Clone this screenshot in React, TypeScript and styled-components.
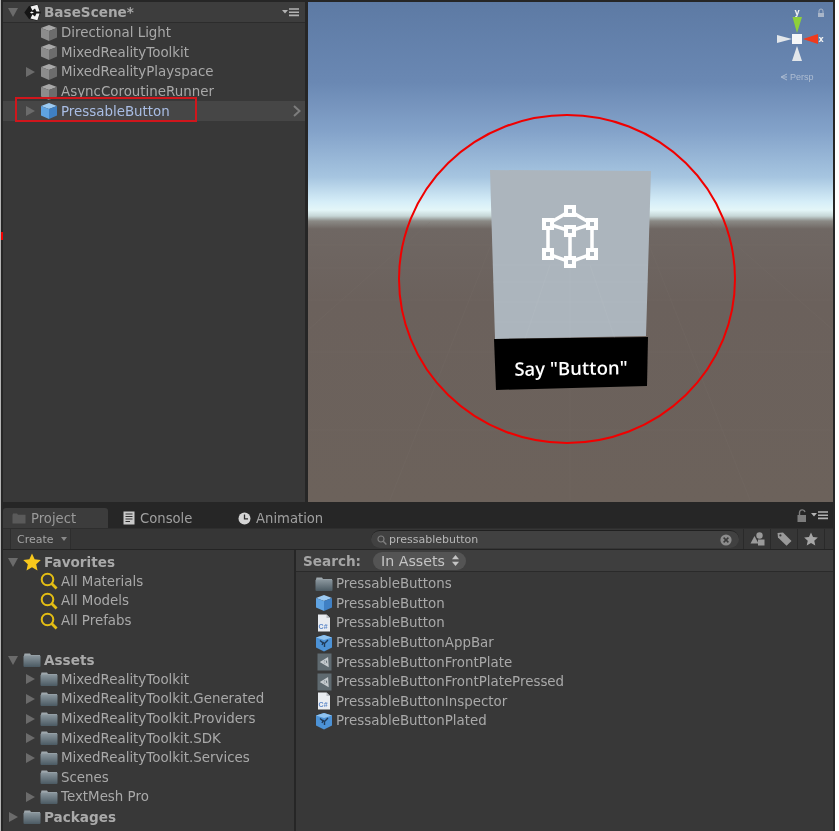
import React from "react"
import styled, { createGlobalStyle } from "styled-components"

const GlobalStyle = createGlobalStyle`
    html, body {
        margin: 0;
        padding: 0;
        background: #ffffff;
    }
    #root {
        width: 839px;
        height: 831px;
    }
`

const Window = styled.div`
    position: relative;
    box-sizing: border-box;
    width: 835px;
    height: 831px;
    padding: 2px 2px 0 2px;
    display: flex;
    flex-direction: column;
    background: #262626;
    border-left: 1px solid #b5b5b5;
    font-family: "DejaVu Sans", sans-serif;
    font-size: 13.4px;
    color: #a9a9a9;
    overflow: hidden;
    filter: blur(0.3px);
`

const EdgeMark = styled.div`
    position: absolute;
    left: 0;
    top: 232px;
    width: 2px;
    height: 8px;
    background: #f00000;
`

const TopArea = styled.div`
    display: flex;
    height: 500px;
    gap: 3px;
`

const HierarchyPanel = styled.section`
    width: 302px;
    background: #383838;
    display: flex;
    flex-direction: column;
`

const PanelHeader = styled.div`
    box-sizing: border-box;
    height: 21px;
    display: flex;
    align-items: center;
    justify-content: space-between;
    padding: 0 6px 0 5px;
    background: #3d3d3d;
    border-bottom: 1px solid #2c2c2c;
`

const HeaderLeft = styled.div`
    display: flex;
    align-items: center;
`

const Row = styled.div<{ $depth?: number; $selected?: boolean }>`
    position: relative;
    box-sizing: border-box;
    height: 19.6px;
    display: flex;
    align-items: center;
    padding-left: ${({ $depth = 0 }) => 5 + $depth * 17}px;
    background: ${({ $selected }) => ($selected ? "#464646" : "transparent")};
    color: ${({ $selected }) => ($selected ? "#a9bde4" : "inherit")};
    white-space: nowrap;
`

const ArrowSlot = styled.span`
    width: 15px;
    height: 12px;
    flex: none;
    display: flex;
    align-items: center;
`

const IconSlot = styled.span`
    width: 18px;
    height: 18px;
    flex: none;
    margin-right: 3px;
    display: flex;
    align-items: center;
    justify-content: center;
`

const Label = styled.span<{ $bold?: boolean }>`
    font-weight: ${({ $bold }) => ($bold ? 700 : 400)};
    font-size: ${({ $bold }) => ($bold ? "13.6px" : "inherit")};
`

const SelectionBox = styled.div`
    position: absolute;
    left: 12px;
    top: -4px;
    width: 182px;
    height: 25px;
    border: 2px solid #d0161c;
    box-sizing: border-box;
`

const RowChevron = styled.svg`
    position: absolute;
    right: 4px;
    top: 4px;
`

const ScenePanel = styled.section`
    position: relative;
    flex: 1;
    background: linear-gradient(
        180deg,
        #5d7aa4 0,
        #6a88b3 80px,
        #84a3ca 130px,
        #a6c5e0 175px,
        #d6eef8 200px,
        #e4f6f8 208px,
        #c6d6d6 214px,
        #8b8a86 219px,
        #6f6763 227px,
        #6b615c 300px,
        #6c625b 500px
    );
`

const SceneDrawing = styled.svg`
    position: absolute;
    left: 0;
    top: 0;
    width: 100%;
    height: 100%;
`

const BottomArea = styled.div`
    flex: 1;
    display: flex;
    flex-direction: column;
    min-height: 0;
`

const TabBar = styled.div`
    height: 26px;
    box-sizing: border-box;
    padding-top: 6px;
    display: flex;
    align-items: stretch;
    position: relative;
`

const Tab = styled.div<{ $active?: boolean; $width: number }>`
    box-sizing: border-box;
    width: ${({ $width }) => $width}px;
    display: flex;
    align-items: center;
    gap: 5px;
    padding-left: ${({ $active }) => ($active ? 9 : 15)}px;
    font-size: 13.2px;
    color: ${({ $active }) => ($active ? "#9a9a9a" : "#a0a0a0")};
    background: ${({ $active }) => ($active ? "#3c3c3c" : "transparent")};
    border-radius: 3px 3px 0 0;
`

const TabTools = styled.div`
    position: absolute;
    right: 5px;
    top: 7px;
    display: flex;
    align-items: center;
    gap: 4px;
`

const Toolbar = styled.div`
    box-sizing: border-box;
    height: 22px;
    display: flex;
    align-items: stretch;
    justify-content: space-between;
    background: #363636;
    border-top: 1px solid #2e2e2e;
    border-bottom: 1px solid #242424;
`

const CreateButton = styled.div`
    box-sizing: border-box;
    width: 61px;
    margin-left: 7px;
    display: flex;
    align-items: center;
    gap: 7px;
    padding-left: 6px;
    font-size: 11px;
    color: #a5a5a5;
    background: #3b3b3b;
    border-left: 1px solid #2e2e2e;
    border-right: 1px solid #2e2e2e;
`

const ToolbarRight = styled.div`
    display: flex;
    align-items: stretch;
`

const SearchField = styled.div`
    box-sizing: border-box;
    width: 368px;
    height: 18px;
    align-self: center;
    display: flex;
    align-items: center;
    gap: 2px;
    padding: 0 7px 0 6px;
    border-radius: 9px;
    background: #414141;
    border-top: 1px solid #202020;
    font-size: 11px;
    color: #b6b6b6;
`

const SearchText = styled.span`
    flex: 1;
`

const ToolButton = styled.div`
    width: 27px;
    box-sizing: border-box;
    display: flex;
    align-items: center;
    justify-content: center;
    border-left: 1px solid #2a2a2a;
`

const ToolbarGap = styled.div<{ $width: number }>`
    width: ${({ $width }) => $width}px;
    border-left: 1px solid #2a2a2a;
`

const SearchGap = styled.div`
    width: 4px;
`

const Browser = styled.div`
    flex: 1;
    display: flex;
    gap: 2px;
    min-height: 0;
`

const Sidebar = styled.aside`
    width: 291px;
    background: #383838;
    padding-top: 2px;
`

const ResultsPane = styled.div`
    flex: 1;
    background: #383838;
    display: flex;
    flex-direction: column;
`

const SearchBar = styled.div`
    box-sizing: border-box;
    height: 22px;
    flex: none;
    display: flex;
    align-items: center;
    gap: 12px;
    padding-left: 7px;
    background: #3e3e3e;
    border-bottom: 1px solid #2a2a2a;
    font-weight: 700;
    font-size: 13.6px;
    color: #a5a5a5;
`

const ScopePill = styled.div`
    box-sizing: border-box;
    width: 93px;
    height: 18px;
    display: flex;
    align-items: center;
    justify-content: space-between;
    padding: 0 7px 0 8px;
    border-radius: 9px;
    background: #545454;
    color: #c4c4c4;
    font-weight: 400;
    font-size: 14.2px;
`

const ResultList = styled.div`
    padding: 2px 0 0 19px;
`

const ResultRow = styled.div`
    height: 19.6px;
    display: flex;
    align-items: center;
    white-space: nowrap;
`

const Arrow = ({ open }: { open?: boolean }) => (
    <svg width="10" height="10" viewBox="0 0 10 10">
        <polygon points={open ? "0,1 10,1 5,10" : "1,0 10,5 1,10"} fill="#6b6b6b" />
    </svg>
)

const Cube = ({ blue }: { blue?: boolean }) => (
    <svg width="18" height="18" viewBox="0 0 18 18">
        <polygon points="9,1 17,4 9,7 1,4" fill={blue ? "#9ccaf2" : "#a8a8a8"} />
        <polygon points="1,4 9,7 9,17 1,13.5" fill={blue ? "#5fa3e2" : "#8c8c8c"} />
        <polygon points="17,4 9,7 9,17 17,13.5" fill={blue ? "#3f80c4" : "#6c6c6c"} />
    </svg>
)

const Folder = () => (
    <svg width="18" height="16" viewBox="0 0 18 16">
        <defs>
            <linearGradient id="folderFill" x1="0" y1="0" x2="0" y2="1">
                <stop offset="0" stopColor="#8b979e" />
                <stop offset="1" stopColor="#4b5a63" />
            </linearGradient>
        </defs>
        <path d="M1 3.5 L1.5 1.5 H7 L8 3 H17 V4 H1 Z" fill="#9fa8ad" />
        <rect x="0.5" y="3.5" width="17" height="11.5" rx="1" fill="url(#folderFill)" />
    </svg>
)

const Star = () => (
    <svg width="18" height="18" viewBox="0 0 18 18">
        <polygon
            points="9,0.5 11.6,6.3 17.8,7 13.2,11.2 14.5,17.4 9,14.3 3.5,17.4 4.8,11.2 0.2,7 6.4,6.3"
            fill="#f8c81c"
        />
    </svg>
)

const Magnifier = () => (
    <svg width="18" height="18" viewBox="0 0 18 18">
        <circle cx="7.5" cy="7.5" r="5.8" fill="none" stroke="#e3bd14" strokeWidth="2" />
        <line x1="11.6" y1="11.6" x2="16.6" y2="16.4" stroke="#e3bd14" strokeWidth="2.8" />
    </svg>
)

const UnityLogo = () => (
    <svg width="17" height="17" viewBox="0 0 17 17">
        <polygon points="0.3,8.5 5,2 13.5,0.3 16.7,8.5 13.5,16.7 5,15" fill="#151515" />
        <polygon points="6.5,2.6 13.4,0.8 15.6,7.4 12.4,7.6 11,4.6 8.4,6.6" fill="#f2f2f2" />
        <polygon points="6.5,14.4 13.4,16.2 15.6,9.6 12.4,9.4 11,12.4 8.4,10.4" fill="#f2f2f2" />
        <polygon points="6,8.5 7.6,7.6 10,8.5 7.6,9.4" fill="#f2f2f2" />
    </svg>
)

const ScriptDoc = () => (
    <svg width="14" height="18" viewBox="0 0 14 18">
        <path d="M1 0.5 H9.5 L13 4 V17.5 H1 Z" fill="#e9ecf0" />
        <path d="M9.5 0.5 L13 4 H9.5 Z" fill="#b8bcc2" />
        <text x="1.6" y="14.5" fontSize="7" fontWeight="700" fontFamily="Liberation Sans, sans-serif" fill="#5d87c8">
            C#
        </text>
    </svg>
)

const VariantCube = () => (
    <svg width="18" height="18" viewBox="0 0 18 18">
        <polygon points="9,1 17,3.5 17,13.5 9,17.5 1,13.5 1,3.5" fill="#4c92d6" />
        <polygon points="9,1 17,3.5 9,6 1,3.5" fill="#8fc2ee" />
        <path d="M5 6.5 L8 9 L7 11 M13 6 L9.5 9.5 V13 M9.5 9.5 L7.5 8" fill="none" stroke="#1f3a58" strokeWidth="1.4" />
    </svg>
)

const ShaderTile = () => (
    <svg width="15" height="18" viewBox="0 0 15 18">
        <rect x="0.5" y="0.5" width="14" height="17" fill="#5f6a70" />
        <path d="M4 9 L10.5 5 L11 13 Z M4 9 H8 M10.5 5 L8 9 L11 13" fill="none" stroke="#c6cbcf" strokeWidth="1.3" />
    </svg>
)

const ConsoleIcon = () => (
    <svg width="12" height="14" viewBox="0 0 12 14">
        <rect x="0.5" y="0.5" width="11" height="13" fill="#c9c9c9" />
        <path d="M2.5 3 H9.5 M2.5 5.5 H9.5 M2.5 8 H9.5 M2.5 10.5 H7" stroke="#2f2f2f" strokeWidth="1.2" />
    </svg>
)

const ClockIcon = () => (
    <svg width="13" height="13" viewBox="0 0 13 13">
        <circle cx="6.5" cy="6.5" r="6" fill="#d4d4d4" />
        <path d="M6.5 2.5 V6.8 H10" fill="none" stroke="#2b2b2b" strokeWidth="1.3" />
    </svg>
)

const FolderTabIcon = () => (
    <svg width="14" height="11" viewBox="0 0 14 11">
        <path d="M0.5 2 L1 0.5 H5 L6 1.8 H13.5 V10.5 H0.5 Z" fill="#5a5a5a" />
    </svg>
)

const PanelMenu = () => (
    <svg width="17" height="9" viewBox="0 0 17 9">
        <polygon points="0,2 6,2 3,5.5" fill="#b2b2b2" />
        <path d="M7 1 H17 M7 4.2 H17 M7 7.4 H17" stroke="#b2b2b2" strokeWidth="1.6" />
    </svg>
)

const LockIcon = () => (
    <svg width="10" height="13" viewBox="0 0 10 13">
        <path d="M2.5 6 V3.5 A2.8 2.8 0 0 1 8 3" fill="none" stroke="#7c7c7c" strokeWidth="1.4" />
        <rect x="0.5" y="6" width="8.5" height="7" fill="#7c7c7c" />
    </svg>
)

const SearchGlass = () => (
    <svg width="10" height="10" viewBox="0 0 10 10">
        <circle cx="4" cy="4" r="3" fill="none" stroke="#7f7f7f" strokeWidth="1.2" />
        <line x1="6.2" y1="6.2" x2="9.4" y2="9.4" stroke="#7f7f7f" strokeWidth="1.4" />
    </svg>
)

const ClearIcon = () => (
    <svg width="12" height="12" viewBox="0 0 12 12">
        <circle cx="6" cy="6" r="5.6" fill="#8c8c8c" />
        <path d="M3.6 3.6 L8.4 8.4 M8.4 3.6 L3.6 8.4" stroke="#3a3a3a" strokeWidth="1.5" />
    </svg>
)

const LabelFilterIcon = () => (
    <svg width="15" height="14" viewBox="0 0 15 14">
        <circle cx="9.5" cy="3.5" r="3.2" fill="#9a9a9a" />
        <polygon points="4.5,4 8.5,11.5 0.5,11.5" fill="#9a9a9a" />
        <rect x="8" y="7.5" width="6.5" height="6" fill="#9a9a9a" />
    </svg>
)

const TagIcon = () => (
    <svg width="15" height="14" viewBox="0 0 15 14">
        <polygon points="0.5,1 6,0.5 14.5,9 9.5,13.8 1,5.5" fill="#9a9a9a" />
        <circle cx="3.4" cy="3.4" r="1.1" fill="#383838" />
    </svg>
)

const StarFilterIcon = () => (
    <svg width="14" height="14" viewBox="0 0 18 18">
        <polygon
            points="9,0.5 11.6,6.3 17.8,7 13.2,11.2 14.5,17.4 9,14.3 3.5,17.4 4.8,11.2 0.2,7 6.4,6.3"
            fill="#a6a6a6"
        />
    </svg>
)

const ScopeStepper = () => (
    <svg width="7" height="11" viewBox="0 0 7 11">
        <polygon points="3.5,0 7,4.2 0,4.2" fill="#c4c4c4" />
        <polygon points="3.5,11 7,6.8 0,6.8" fill="#c4c4c4" />
    </svg>
)

const DropCaret = () => (
    <svg width="6" height="4" viewBox="0 0 6 4">
        <polygon points="0,0 6,0 3,4" fill="#8a8a8a" />
    </svg>
)

type TreeItem = { name: string; depth: number; arrow?: "open" | "closed"; bold?: boolean; icon: React.ReactNode }

const hierarchyItems: TreeItem[] = [
    { name: "Directional Light", depth: 1, icon: <Cube /> },
    { name: "MixedRealityToolkit", depth: 1, icon: <Cube /> },
    { name: "MixedRealityPlayspace", depth: 1, arrow: "closed", icon: <Cube /> },
    { name: "AsyncCoroutineRunner", depth: 1, icon: <Cube /> },
]

const browserItems: (TreeItem | null)[] = [
    { name: "Favorites", depth: 0, arrow: "open", bold: true, icon: <Star /> },
    { name: "All Materials", depth: 1, icon: <Magnifier /> },
    { name: "All Models", depth: 1, icon: <Magnifier /> },
    { name: "All Prefabs", depth: 1, icon: <Magnifier /> },
    null,
    { name: "Assets", depth: 0, arrow: "open", bold: true, icon: <Folder /> },
    { name: "MixedRealityToolkit", depth: 1, arrow: "closed", icon: <Folder /> },
    { name: "MixedRealityToolkit.Generated", depth: 1, arrow: "closed", icon: <Folder /> },
    { name: "MixedRealityToolkit.Providers", depth: 1, arrow: "closed", icon: <Folder /> },
    { name: "MixedRealityToolkit.SDK", depth: 1, arrow: "closed", icon: <Folder /> },
    { name: "MixedRealityToolkit.Services", depth: 1, arrow: "closed", icon: <Folder /> },
    { name: "Scenes", depth: 1, icon: <Folder /> },
    { name: "TextMesh Pro", depth: 1, arrow: "closed", icon: <Folder /> },
    { name: "Packages", depth: 0, arrow: "closed", bold: true, icon: <Folder /> },
]

const results = [
    { name: "PressableButtons", icon: <Folder /> },
    { name: "PressableButton", icon: <Cube blue /> },
    { name: "PressableButton", icon: <ScriptDoc /> },
    { name: "PressableButtonAppBar", icon: <VariantCube /> },
    { name: "PressableButtonFrontPlate", icon: <ShaderTile /> },
    { name: "PressableButtonFrontPlatePressed", icon: <ShaderTile /> },
    { name: "PressableButtonInspector", icon: <ScriptDoc /> },
    { name: "PressableButtonPlated", icon: <VariantCube /> },
]

const TreeRow = ({ item }: { item: TreeItem }) => (
    <Row $depth={item.depth}>
        <ArrowSlot>{item.arrow && <Arrow open={item.arrow === "open"} />}</ArrowSlot>
        <IconSlot>{item.icon}</IconSlot>
        <Label $bold={item.bold}>{item.name}</Label>
    </Row>
)

const cubeNodes = [
    [570, 211],
    [548, 224],
    [592, 224],
    [570, 231],
    [548, 254],
    [592, 254],
    [570, 262],
]

const SceneView = () => (
    <SceneDrawing viewBox="308 2 525 500">
        <g stroke="#7a716b" strokeWidth="1" opacity="0.2">
            <path d="M308 245 H833 M308 268 H833 M308 300 H833 M308 352 H833 M308 430 H833" />
            <path d="M570 222 L570 500 M500 222 L390 500 M640 222 L750 500 M430 222 L308 330 M710 222 L833 330" />
        </g>
        <polygon points="490,170 651,171 646,336 495,339" fill="#acb5bd" />
        <g stroke="#b8c0c6" strokeWidth="1" opacity="0.25">
            <path d="M493 265 H648 M493 282 H648 M494 302 H647 M495 322 H646" />
            <path d="M550 265 L525 339 M590 265 L615 339 M570 265 V338" />
        </g>
        <polygon points="494,339 648,337 647,386 496,390" fill="#000000" />
        <text
            x="571"
            y="375"
            textAnchor="middle"
            fontFamily="Open Sans, sans-serif"
            fontSize="18.5"
            fontWeight="600"
            fill="#ffffff"
            transform="rotate(-0.8 571 368)"
        >
            Say "Button"
        </text>
        <g stroke="#ffffff" strokeWidth="3.5" fill="none">
            <path d="M570 211 L548 224 L570 231 L592 224 Z" />
            <path d="M548 224 V254 L570 262 L592 254 V224 M570 231 V262" />
        </g>
        {cubeNodes.map(([x, y]) => (
            <g key={`${x}-${y}`}>
                <rect x={x - 6} y={y - 6} width="12" height="12" fill="#ffffff" />
                <rect x={x - 2} y={y - 2} width="4" height="4" fill="#acb5bd" />
            </g>
        ))}
        <ellipse cx="567" cy="279" rx="168" ry="164" fill="none" stroke="#f00000" strokeWidth="2" />
        <polygon points="792.5,17 802,17 797,33" fill="#8ed03a" />
        <polygon points="803,39 818,34 818,44" fill="#f03a1c" />
        <polygon points="777,35 777,43 792,39" fill="#e2e6ea" />
        <polygon points="792,61 802,61 797,46" fill="#e2e6ea" />
        <rect x="792" y="34" width="10" height="10" fill="#f4f6f8" />
        <text x="797" y="15" textAnchor="middle" fontFamily="DejaVu Sans, sans-serif" fontWeight="700" fontSize="8" fill="#f0f0f0">
            y
        </text>
        <text x="821" y="42" textAnchor="middle" fontFamily="DejaVu Sans, sans-serif" fontWeight="700" fontSize="8" fill="#f0f0f0">
            x
        </text>
        <path d="M819 13 V11 A2 2 0 0 1 823 11 V13" fill="none" stroke="#a9b6c9" strokeWidth="1" />
        <rect x="818" y="13" width="6" height="4" fill="#a9b6c9" />
        <path d="M787 74 L781 77 L787 80 M787 77 H782" stroke="#aebdd2" strokeWidth="1" fill="none" />
        <text x="790" y="80" fontFamily="Liberation Sans, sans-serif" fontSize="9" fill="#aebdd2">
            Persp
        </text>
    </SceneDrawing>
)

const App = () => (
    <>
        <GlobalStyle />
        <Window>
            <EdgeMark />
            <TopArea>
                <HierarchyPanel>
                    <PanelHeader>
                        <HeaderLeft>
                            <ArrowSlot>
                                <Arrow open />
                            </ArrowSlot>
                            <IconSlot>
                                <UnityLogo />
                            </IconSlot>
                            <Label $bold>BaseScene*</Label>
                        </HeaderLeft>
                        <PanelMenu />
                    </PanelHeader>
                    {hierarchyItems.map((item) => (
                        <TreeRow key={item.name} item={item} />
                    ))}
                    <Row $depth={1} $selected>
                        <ArrowSlot>
                            <Arrow />
                        </ArrowSlot>
                        <IconSlot>
                            <Cube blue />
                        </IconSlot>
                        <Label>PressableButton</Label>
                        <RowChevron width="8" height="12" viewBox="0 0 8 12">
                            <path d="M1 1 L6.5 6 L1 11" fill="none" stroke="#7d7d7d" strokeWidth="2" />
                        </RowChevron>
                        <SelectionBox />
                    </Row>
                </HierarchyPanel>
                <ScenePanel>
                    <SceneView />
                </ScenePanel>
            </TopArea>
            <BottomArea>
                <TabBar>
                    <Tab $active $width={105}>
                        <FolderTabIcon />
                        Project
                    </Tab>
                    <Tab $width={115}>
                        <ConsoleIcon />
                        Console
                    </Tab>
                    <Tab $width={110}>
                        <ClockIcon />
                        Animation
                    </Tab>
                    <TabTools>
                        <LockIcon />
                        <PanelMenu />
                    </TabTools>
                </TabBar>
                <Toolbar>
                    <CreateButton>
                        Create
                        <DropCaret />
                    </CreateButton>
                    <ToolbarRight>
                        <SearchField>
                            <SearchGlass />
                            <SearchText>pressablebutton</SearchText>
                            <ClearIcon />
                        </SearchField>
                        <SearchGap />
                        <ToolButton>
                            <LabelFilterIcon />
                        </ToolButton>
                        <ToolButton>
                            <TagIcon />
                        </ToolButton>
                        <ToolButton>
                            <StarFilterIcon />
                        </ToolButton>
                        <ToolbarGap $width={8} />
                    </ToolbarRight>
                </Toolbar>
                <Browser>
                    <Sidebar>
                        {browserItems.map((item, index) =>
                            item ? <TreeRow key={item.name + index} item={item} /> : <Row key={index} />,
                        )}
                    </Sidebar>
                    <ResultsPane>
                        <SearchBar>
                            Search:
                            <ScopePill>
                                In Assets
                                <ScopeStepper />
                            </ScopePill>
                        </SearchBar>
                        <ResultList>
                            {results.map((result, index) => (
                                <ResultRow key={result.name + index}>
                                    <IconSlot>{result.icon}</IconSlot>
                                    <Label>{result.name}</Label>
                                </ResultRow>
                            ))}
                        </ResultList>
                    </ResultsPane>
                </Browser>
            </BottomArea>
        </Window>
    </>
)

export default App
